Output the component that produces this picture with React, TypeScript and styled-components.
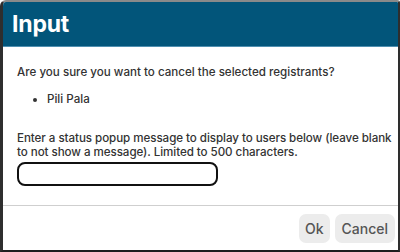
import React from "react";
import styled, { createGlobalStyle } from "styled-components";

const Global = createGlobalStyle`
  html, body { margin: 0; padding: 0; background: #fff; }
  body { font-family: Inter, "Noto Sans", Arial, sans-serif; }
  * { box-sizing: border-box; }
`;

const Frame = styled.div`
  width: 400px;
  height: 252px;
  display: flex;
  flex-direction: column;
  border-style: solid;
  border-color: #8a8a8a #2e2e2e #1e1e1e #2e2e2e;
  border-width: 2px 2px 2px 3px;
  border-top-left-radius: 6px;
  border-top-right-radius: 3px;
  overflow: hidden;
  background: #fff;
`;

const Header = styled.div`
  height: 45px;
  flex: none;
  background: #02557a;
  border-bottom: 1px solid #4f8fb0;
  display: flex;
  align-items: center;
  padding-left: 9px;
  color: #fff;
  font-size: 23px;
  font-weight: 700;
  letter-spacing: -0.2px;
`;

const Body = styled.div`
  flex: 1;
  padding: 18px 0 0 14px;
  color: #333;
  font-size: 11.6px;
  font-weight: 500;
  line-height: 14px;
  border-bottom: 1px solid #cfcfcf;
`;

const Para = styled.p`
  margin: 0;
`;

const List = styled.ul`
  margin: 13px 0 0 0;
  padding-left: 30px;
`;

const Note = styled.p`
  margin: 25px 0 0 0;
  letter-spacing: -0.06px;
`;

const Field = styled.input`
  display: block;
  margin-top: 3px;
  width: 201px;
  height: 24px;
  border: 2px solid #111;
  border-radius: 8px;
  outline: none;
  background: #fff;
`;

const Footer = styled.div`
  height: 44px;
  flex: none;
  display: flex;
  justify-content: flex-end;
  align-items: center;
  gap: 5px;
  padding-right: 3px;
`;

const Button = styled.button<{ $px: number }>`
  height: 29px;
  padding: 0 ${(p) => p.$px}px;
  border: none;
  border-radius: 7px;
  background: #ececec;
  color: #555;
  font-family: Inter, "Noto Sans", Arial, sans-serif;
  font-size: 14px;
  font-weight: 500;
`;

export default function App() {
  return (
    <>
      <Global />
      <Frame>
        <Header>Input</Header>
        <Body>
          <Para>Are you sure you want to cancel the selected registrants?</Para>
          <List>
            <li>Pili Pala</li>
          </List>
          <Note>
            Enter a status popup message to display to users below (leave blank
            to not show a message). Limited to 500 characters.
          </Note>
          <Field type="text" />
        </Body>
        <Footer>
          <Button $px={6}>Ok</Button>
          <Button $px={7}>Cancel</Button>
        </Footer>
      </Frame>
    </>
  );
}
